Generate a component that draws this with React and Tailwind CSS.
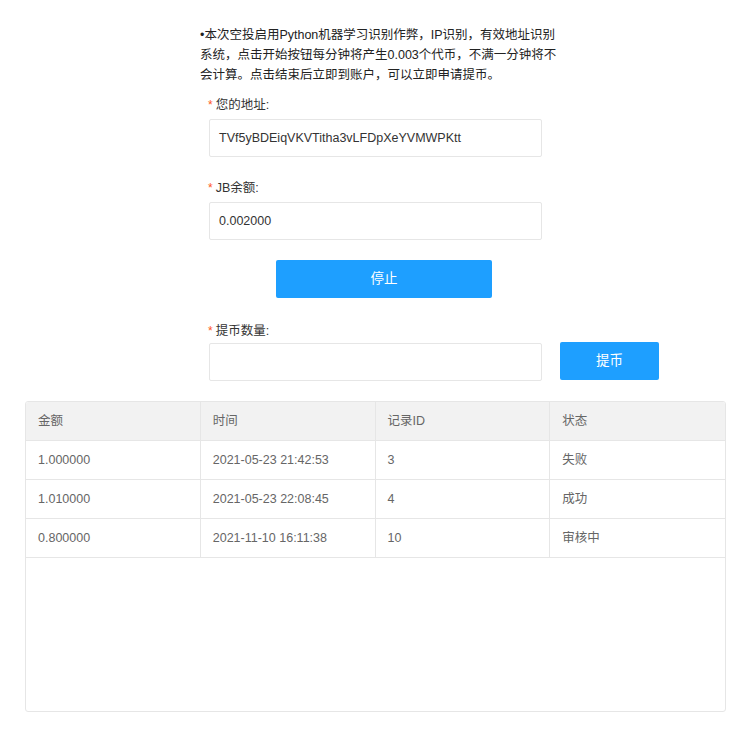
import React from 'react';

const records = [
    { amount: '1.000000', time: '2021-05-23 21:42:53', id: '3', status: '失败' },
    { amount: '1.010000', time: '2021-05-23 22:08:45', id: '4', status: '成功' },
    { amount: '0.800000', time: '2021-11-10 16:11:38', id: '10', status: '审核中' },
];

const font = { fontFamily: '"Liberation Sans", Arial, "Noto Sans CJK SC", sans-serif' };

const Label = ({ children, className = '' }) => (
    <div className={`flex items-center h-5 pl-[8px] text-[12.5px] text-[#333] ${className}`}>
        <span className="text-[#ff5722] mr-[3px] text-[12px]">*</span>
        {children}
    </div>
);

const Input = ({ value, className = '' }) => (
    <div className={`h-[38px] w-[333px] ml-[9px] border border-[#e6e6e6] rounded-[2px] bg-white flex items-center pl-[9px] text-[12.5px] text-[#333] shrink-0 ${className}`}>
        {value}
    </div>
);

export default function App() {
    return (
        <div className="w-[753px] h-[753px] bg-white px-[25px]" style={font}>
            {/* Form */}
            <div className="ml-[175px] w-[480px] pt-[25px]">
                <p className="text-[12.5px] leading-[20px] text-[#222] w-[362px]">
                    •本次空投启用Python机器学习识别作弊，IP识别，有效地址识别系统，点击开始按钮每分钟将产生0.003个代币，不满一分钟将不会计算。点击结束后立即到账户，可以立即申请提币。
                </p>

                <Label className="mt-[10px]">您的地址:</Label>
                <Input className="mt-[4px]" value="TVf5yBDEiqVKVTitha3vLFDpXeYVMWPKtt" />

                <Label className="mt-[21px]">JB余额:</Label>
                <Input className="mt-[4px]" value="0.002000" />

                <button className="mt-[20px] ml-[76px] w-[216px] h-[38px] rounded-[2px] bg-[#1e9fff] text-white text-[13.5px]">
                    停止
                </button>

                <Label className="mt-[23px]">提币数量:</Label>
                <div className="flex items-start mt-[1px]">
                    <Input className="mt-[1px]" value="" />
                    <button className="ml-[18px] w-[99px] h-[38px] rounded-[2px] bg-[#1e9fff] text-white text-[13.5px] shrink-0">
                        提币
                    </button>
                </div>
            </div>

            {/* Records table */}
            <div className="mt-[20px] w-[701px] h-[311px] border border-[#e6e6e6] rounded-[3px] overflow-hidden text-[12.5px] text-[#666]">
                <div className="grid grid-cols-4 h-[39px] bg-[#f2f2f2] border-b border-[#e6e6e6]">
                    {['金额', '时间', '记录ID', '状态'].map((h, i) => (
                        <div key={h} className={`flex items-center pl-[12px] ${i < 3 ? 'border-r border-[#e6e6e6]' : ''}`}>{h}</div>
                    ))}
                </div>
                {records.map(r => (
                    <div key={r.id} className="grid grid-cols-4 h-[39px] border-b border-[#e6e6e6]">
                        {[r.amount, r.time, r.id, r.status].map((v, i) => (
                            <div key={i} className={`flex items-center pl-[12px] ${i < 3 ? 'border-r border-[#e6e6e6]' : ''}`}>{v}</div>
                        ))}
                    </div>
                ))}
            </div>
        </div>
    );
}
